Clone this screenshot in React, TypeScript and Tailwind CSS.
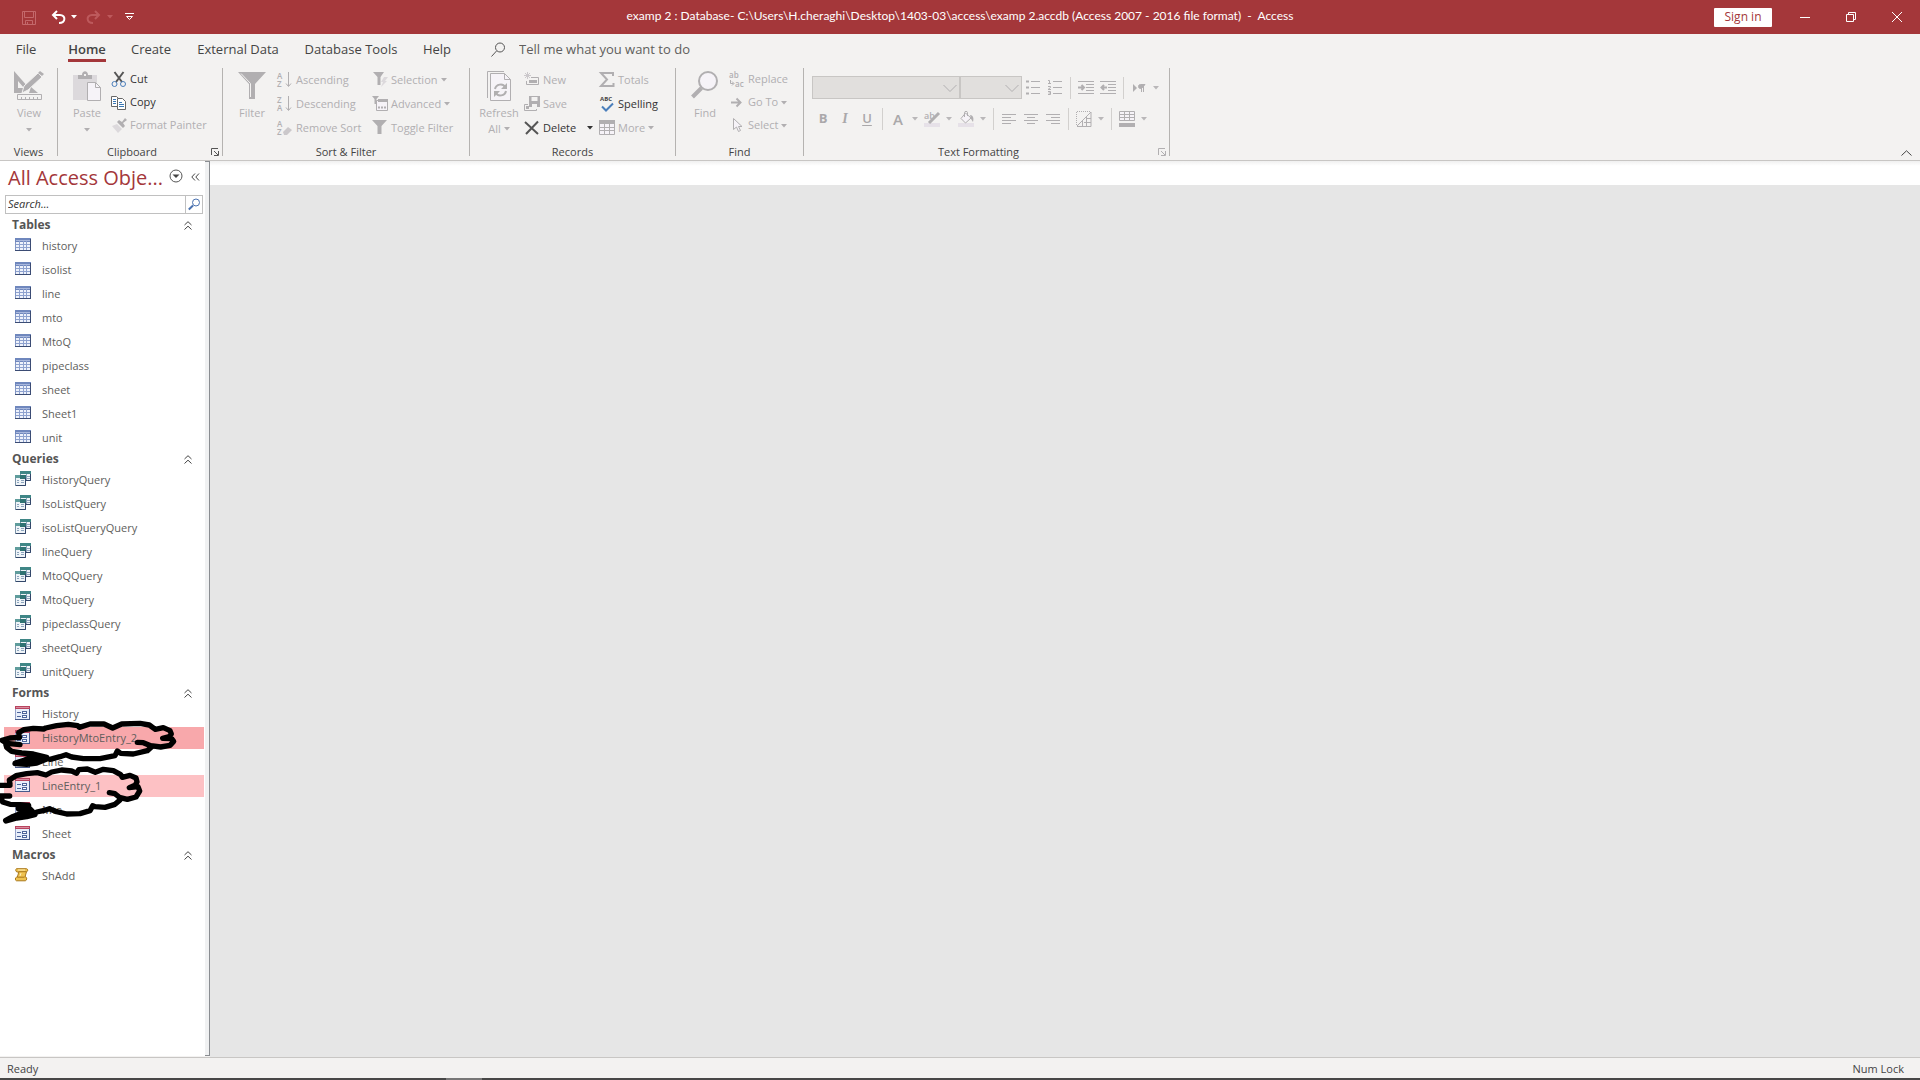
import React, { useState } from "react";

type IconProps = { className?: string };

type NavItem = { name: string; mark?: "strong" | "light" };

type NavGroup = {
  title: string;
  kind: "table" | "query" | "form" | "macro";
  items: NavItem[];
};

const TABS = [
  { name: "File", width: "w-[52px]" },
  { name: "Home", width: "w-[70px]" },
  { name: "Create", width: "w-[58px]" },
  { name: "External Data", width: "w-[116px]" },
  { name: "Database Tools", width: "w-[110px]" },
  { name: "Help", width: "w-[62px]" },
];

const NAV: NavGroup[] = [
  {
    title: "Tables",
    kind: "table",
    items: ["history", "isolist", "line", "mto", "MtoQ", "pipeclass", "sheet", "Sheet1", "unit"].map(
      (name) => ({ name })
    ),
  },
  {
    title: "Queries",
    kind: "query",
    items: [
      "HistoryQuery",
      "IsoListQuery",
      "isoListQueryQuery",
      "lineQuery",
      "MtoQQuery",
      "MtoQuery",
      "pipeclassQuery",
      "sheetQuery",
      "unitQuery",
    ].map((name) => ({ name })),
  },
  {
    title: "Forms",
    kind: "form",
    items: [
      { name: "History" },
      { name: "HistoryMtoEntry_2", mark: "strong" },
      { name: "Line" },
      { name: "LineEntry_1", mark: "light" },
      { name: "Mto" },
      { name: "Sheet" },
    ],
  },
  { title: "Macros", kind: "macro", items: [{ name: "ShAdd" }] },
];

/* ---------- small shapes ---------- */

function Caret({ className = "" }: IconProps) {
  return (
    <svg className={`shrink-0 ${className}`} width="6" height="4" viewBox="0 0 6 4" fill="currentColor">
      <path d="M0 0h6L3 3.5z" />
    </svg>
  );
}

function Launcher({ className = "" }: IconProps) {
  return (
    <svg className={className} width="8" height="8" viewBox="0 0 8 8" fill="none" stroke="currentColor">
      <path d="M.5 7V.5H7M3 3l4 4M7.5 3v4.5H3" />
    </svg>
  );
}

function Icon16({ children }: { children: React.ReactNode }) {
  return (
    <svg className="shrink-0 overflow-visible" width="16" height="16" viewBox="0 0 16 16" fill="none" stroke="#b1afb1">
      {children}
    </svg>
  );
}

/* ---------- navigation pane icons ---------- */

function TableIcon() {
  return (
    <svg width="17" height="14" viewBox="0 0 17 14">
      <rect x=".5" y=".5" width="15" height="12" fill="#eef2fb" stroke="#8296c4" />
      <rect x="0" y="0" width="16" height="4" fill="#6f87bd" />
      <path d="M1 2.5h14" stroke="#a9b8dd" />
      <path d="M1 6.5h14M1 9.5h14M4.5 3v10M8.5 3v10M11.5 3v10" stroke="#8ea2cf" />
      <path d="M0 12.500h16M15.500 1v12" stroke="#3b4c74" />
    </svg>
  );
}

function QueryIcon() {
  return (
    <svg width="17" height="16" viewBox="0 0 17 16">
      <rect x="5.500" y=".5" width="10" height="9" fill="#eff4f8" stroke="#7b93a8" />
      <rect x="5" y="0" width="11" height="3" fill="#3f8686" />
      <path d="M12 5.500h3M12 7.500h3M11.500 3v6" stroke="#8ca4bd" />
      <path d="M15.500 3v6.500H11" stroke="#33476a" fill="none" />
      <rect x=".5" y="4.500" width="10" height="10" fill="#eff4f8" stroke="#7b93a8" />
      <rect x="0" y="4" width="11" height="3" fill="#5f9c9c" />
      <rect x="5" y="4" width="6" height="4" fill="#2f7373" />
      <path d="M2 9.500h2M2 11.500h2M6 9.500h3M6 11.500h3" stroke="#8ca4bd" />
      <path d="M10.500 7v7.500H1" stroke="#33476a" fill="none" />
    </svg>
  );
}

function FormIcon() {
  return (
    <svg width="16" height="15" viewBox="0 0 16 15">
      <rect x=".5" y=".5" width="14" height="13" fill="#e8eefa" stroke="#94a1c8" />
      <rect x="0" y="0" width="15" height="3" fill="#b8445f" />
      <path d="M1 1.500h13" stroke="#d98da0" />
      <path d="M2 6.500h4M2 10.500h4" stroke="#4d649b" />
      <rect x="7.500" y="5.500" width="4" height="2" fill="#fff" stroke="#4d649b" />
      <rect x="7.500" y="9.500" width="4" height="2" fill="#fff" stroke="#4d649b" />
      <path d="M0 13.500h15M14.500 3v11" stroke="#485b8c" />
    </svg>
  );
}

function MacroIcon() {
  return (
    <svg width="14" height="14" viewBox="0 0 14 14">
      <path
        d="M1.500.7h10c1.800.3 1.500 2.800 0 3L10 9h.8c1.400.3 1.200 3.500-.5 3.800H1.500c-1.600-.3-1.500-3.300 0-3.600h.8L3.800 4H2C.4 3.600.4 1 1.500.7z"
        fill="#f0c350"
        stroke="#a9781c"
      />
      <path d="M3.500 3.700h8M2.500 9.200h7" stroke="#a9781c" />
      <path d="M3 2h7M6 5 5 8" stroke="#fdeeb5" />
    </svg>
  );
}

const NAV_ICONS = { table: TableIcon, query: QueryIcon, form: FormIcon, macro: MacroIcon };

/* ---------- ribbon pieces ---------- */

type GroupProps = {
  label: string;
  width: string;
  launcher?: "dark" | "dim";
  children: React.ReactNode;
};

function Group({ label, width, launcher, children }: GroupProps) {
  return (
    <>
      <section aria-label={label} className={`flex shrink-0 flex-col ${width}`}>
        <div className="flex h-[76px]">{children}</div>
        <div className={`relative text-center leading-4 text-[#444] ${launcher ? "pr-4" : ""}`}>
          {label}
          {launcher && (
            <button
              aria-label={`${label} settings`}
              className={`absolute right-[3px] top-1 ${
                launcher === "dark" ? "text-[#555]" : "text-[#b1afb1]"
              }`}
            >
              <Launcher />
            </button>
          )}
        </div>
      </section>
      <div className="h-[88px] w-px shrink-0 bg-[#b5b3b1]" />
    </>
  );
}

type BigProps = { label: string; icon: React.ReactNode; arrow?: boolean; second?: string };

function BigButton({ label, icon, arrow, second }: BigProps) {
  return (
    <button className="flex w-[46px] shrink-0 flex-col items-center pt-[3px] text-[#b1afb1]">
      <span className="flex h-[34px] items-start">{icon}</span>
      <span className="leading-4">{label}</span>
      {arrow && <Caret className="mt-[7px]" />}
      {second && (
        <span className="flex items-center gap-[3px] leading-4">
          {second}
          <Caret />
        </span>
      )}
    </button>
  );
}

type SmallProps = { label: string; icon: React.ReactNode; active?: boolean; arrow?: boolean; wide?: boolean };

function SmallButton({ label, icon, active, arrow, wide }: SmallProps) {
  return (
    <button
      className={`flex flex-1 items-center gap-[3px] whitespace-nowrap ${
        active ? "text-[#333]" : "text-[#b1afb1]"
      }`}
    >
      {icon}
      {label}
      {arrow && <Caret className={wide ? "ml-2" : ""} />}
    </button>
  );
}

function Tool({ label, children }: { label: string; children: React.ReactNode }) {
  return (
    <button aria-label={label} className="flex h-[22px] w-[22px] items-center justify-center text-[#aaa8aa]">
      {children}
    </button>
  );
}

function ToolCaret({ label }: { label: string }) {
  return (
    <button aria-label={label} className="flex h-[22px] w-3 items-center justify-center text-[#b9b7b9]">
      <Caret />
    </button>
  );
}

function ToolSeparator() {
  return <div className="mx-1 h-[22px] w-px bg-[#d2d0ce]" />;
}

function Combo({ label, width }: { label: string; width: string }) {
  return (
    <div className={`relative ${width}`}>
      <select
        aria-label={label}
        disabled
        className="block h-[23px] w-full appearance-none border border-[#c8c6c4] bg-[#e1dfdd]"
      />
      <svg
        className="pointer-events-none absolute right-[3px] top-2"
        width="14"
        height="9"
        viewBox="0 0 14 9"
        fill="none"
        stroke="#b1afb1"
      >
        <path d="M.5 1 7 7.500 13.500 1" />
      </svg>
    </div>
  );
}

function Letters({ top, bottom }: { top: string; bottom: string }) {
  return (
    <>
      <text x="0" y="7" fontSize="8" fontWeight="600" fill="#b1afb1" stroke="none">
        {top}
      </text>
      <text x="0" y="15" fontSize="8" fontWeight="600" fill="#b1afb1" stroke="none">
        {bottom}
      </text>
    </>
  );
}

function Ribbon() {
  return (
    <div className="relative flex h-[93px] shrink-0 border-b border-[#c8c6c4]">
      <Group label="Views" width="w-[57px]">
        <div className="pl-1.5">
          <BigButton
            label="View"
            arrow
            icon={
              <svg width="30" height="30" viewBox="0 0 30 30" fill="none">
                <path d="M0 0v22h8l6-6L0 0zm4 10 6 7H4z" fill="#b1afb1" fillRule="evenodd" />
                <path d="M8 22l2-7L24 2l4 4-14 13z" fill="#b1afb1" stroke="#f3f2f1" />
                <path d="M26 0l4 3-2 2-4-3z" fill="#b1afb1" />
                <path d="M17 16l7 6h-9z" fill="#b1afb1" />
                <path d="M3.500 23.500h24v5h-24zM7.500 26v2M11.500 26v2M15.500 26v2M19.500 26v2M23.500 26v2" stroke="#b1afb1" />
              </svg>
            }
          />
        </div>
      </Group>

      <Group label="Clipboard" width="w-[164px]" launcher="dark">
        <div className="flex gap-px pl-1.5">
          <BigButton
            label="Paste"
            arrow
            icon={
              <svg width="28" height="31" viewBox="0 0 28 31">
                <path d="M0 4h24v25H0z" fill="#dcd9dc" />
                <path d="M5 4h4c0-5 6-5 6 0h4v4H5z" fill="#b1afb1" />
                <path d="M11 3h2v2h-2z" fill="#f3f2f1" />
                <path d="M14.500 11.500h8l5 5v13h-13z" fill="#f6f3f8" stroke="#b1afb1" />
                <path d="M22.500 11.500v5h5" fill="none" stroke="#b1afb1" />
              </svg>
            }
          />
          <div className="flex h-[69px] flex-col">
            <SmallButton
              label="Cut"
              active
              icon={
                <Icon16>
                  <path d="M3.500 0 11 10M12.500 0 5 10" stroke="#555" strokeWidth="2" />
                  <circle cx="3.500" cy="12" r="2.500" stroke="#4a7ebb" />
                  <circle cx="12" cy="12" r="2.500" stroke="#4a7ebb" />
                </Icon16>
              }
            />
            <SmallButton
              label="Copy"
              active
              icon={
                <Icon16>
                  <path d="M.5 1.500h5l3 3v7h-8z" fill="#fff" stroke="#666" />
                  <path d="M2 4.500h3M2 6.500h3M2 8.500h3" stroke="#3a78b5" />
                  <path d="M6.500 3.500h5l3 3v8h-8z" fill="#fff" stroke="#666" />
                  <path d="M8 7.500h3M8 9.500h5M8 11.500h5" stroke="#3a78b5" />
                </Icon16>
              }
            />
            <SmallButton
              label="Format Painter"
              icon={
                <Icon16>
                  <path d="M1 8l5-2 5 5-4 4z" fill="#dcd9dc" stroke="none" />
                  <path d="M6 4l6 6 2-2-2-3 4-3-2-2-3 4-3-2z" fill="#b1afb1" stroke="none" />
                </Icon16>
              }
            />
          </div>
        </div>
      </Group>

      <Group label="Sort & Filter" width="w-[246px]">
        <div className="flex gap-[2px] pl-1.5">
          <BigButton
            label="Filter"
            icon={
              <svg width="28" height="30" viewBox="0 0 28 30">
                <path d="M0 1h28L17 13v15h-6V13z" fill="#b1afb1" />
                <path d="M3 2.500 12.500 12.500V26" fill="none" stroke="#f3f2f1" />
              </svg>
            }
          />
          <div className="flex h-[72px] w-[93px] flex-col">
            <SmallButton
              label="Ascending"
              icon={
                <Icon16>
                  <Letters top="A" bottom="Z" />
                  <path d="M11.500 0v14M9 11.500l2.500 3 2.500-3" />
                </Icon16>
              }
            />
            <SmallButton
              label="Descending"
              icon={
                <Icon16>
                  <Letters top="Z" bottom="A" />
                  <path d="M11.500 0v14M9 11.500l2.500 3 2.500-3" />
                </Icon16>
              }
            />
            <SmallButton
              label="Remove Sort"
              icon={
                <Icon16>
                  <Letters top="A" bottom="Z" />
                  <path d="M6 12l5-5 4 3-5 5H7z" fill="#cbc8cb" stroke="none" />
                </Icon16>
              }
            />
          </div>
          <div className="flex h-[72px] flex-col">
            <SmallButton
              label="Selection"
              arrow
              icon={
                <Icon16>
                  <path d="M1 0h11L8.500 5v8h-3V5z" fill="#b1afb1" stroke="none" />
                  <path d="M12 5h4l-3 4h2l-6 6 2-5H9z" fill="#dcd9dc" stroke="none" />
                </Icon16>
              }
            />
            <SmallButton
              label="Advanced"
              arrow
              icon={
                <Icon16>
                  <path d="M4.500 4.500h11v10h-11z" fill="#f6f3f8" />
                  <path d="M6 3h10v3H6z" fill="#b1afb1" stroke="none" />
                  <path d="M0 0h7L4.500 3v5h-2V3z" fill="#b1afb1" stroke="none" />
                  <path d="M6 11.500h2M9 11.500h2M12 11.500h2" strokeWidth="2" />
                </Icon16>
              }
            />
            <SmallButton
              label="Toggle Filter"
              icon={
                <Icon16>
                  <path d="M0 0h15L9.500 6v8h-4V6z" fill="#b1afb1" stroke="none" />
                </Icon16>
              }
            />
          </div>
        </div>
      </Group>

      <Group label="Records" width="w-[205px]">
        <div className="flex gap-[2px] pl-1.5">
          <BigButton
            label="Refresh"
            second="All"
            icon={
              <svg width="26" height="32" viewBox="0 0 26 32" fill="none" stroke="#b1afb1">
                <path d="M1.500 27V.5H18" />
                <path d="M4.500 2.500h14l6 6v21h-20z" fill="#f6f3f8" />
                <path d="M18.500 2.500v6h6" />
                <path d="M9 18c1-5 8-6 10-2M20 20c-1 5-8 6-10 2" strokeWidth="2" />
                <path d="M21 12v6h-6zM8 26v-6h6z" fill="#b1afb1" stroke="none" />
              </svg>
            }
          />
          <div className="flex h-[72px] w-[73px] flex-col">
            <SmallButton
              label="New"
              icon={
                <Icon16>
                  <path d="M3.500 0v7M0 3.500h7M1 1l5 5M6 1 1 6" stroke="#cbc8cb" />
                  <path d="M7 5.500h7.500v7h-12V9" fill="none" />
                  <path d="M5 8h8v3H5z" fill="#b1afb1" stroke="none" />
                </Icon16>
              }
            />
            <SmallButton
              label="Save"
              icon={
                <Icon16>
                  <path d="M5 0h11v11H5z" fill="#b1afb1" stroke="none" />
                  <path d="M7.500 1h6v4h-6zM8 8h5v3H8z" fill="#f3f2f1" stroke="none" />
                  <path d="M4 8.500H.5v6h12V13" />
                  <path d="M2 10h3v3H2z" fill="#b1afb1" stroke="none" />
                </Icon16>
              }
            />
            <SmallButton
              label="Delete"
              active
              arrow
              wide
              icon={
                <Icon16>
                  <path d="M1 2l13 12M14 1.500 2 14" stroke="#555" strokeWidth="2" />
                </Icon16>
              }
            />
          </div>
          <div className="flex h-[72px] flex-col">
            <SmallButton
              label="Totals"
              icon={
                <Icon16>
                  <path d="M14 4V1H2l6 6.500L2 14h12.500v-3" strokeWidth="2" />
                </Icon16>
              }
            />
            <SmallButton
              label="Spelling"
              active
              icon={
                <Icon16>
                  <text x="1" y="5" fontSize="6" fontWeight="700" fill="#444" stroke="none">
                    ABC
                  </text>
                  <path d="M3 10.500l4 4 7-7" stroke="#4a7ebb" strokeWidth="2" />
                </Icon16>
              }
            />
            <SmallButton
              label="More"
              arrow
              icon={
                <Icon16>
                  <path d="M.5.5h15v14H.5z" fill="#f6f3f8" />
                  <path d="M0 0h16v4H0z" fill="#b1afb1" stroke="none" />
                  <path d="M0 7.500h16M0 10.500h16M5.500 4v10M10.500 4v10" />
                </Icon16>
              }
            />
          </div>
        </div>
      </Group>

      <Group label="Find" width="w-[127px]">
        <div className="flex gap-px pl-1.5">
          <BigButton
            label="Find"
            icon={
              <svg width="28" height="30" viewBox="0 0 28 30" fill="none" stroke="#b1afb1">
                <circle cx="17" cy="10" r="9" fill="#f6f3f8" strokeWidth="2" />
                <path d="M10.500 17 1.500 26" strokeWidth="4" />
              </svg>
            }
          />
          <div className="flex h-[69px] flex-col">
            <SmallButton
              label="Replace"
              icon={
                <Icon16>
                  <text x="0" y="6" fontSize="8" fontWeight="600" fill="#b1afb1" stroke="none">
                    ab
                  </text>
                  <text x="6" y="15" fontSize="8" fontWeight="600" fill="#b1afb1" stroke="none">
                    ac
                  </text>
                  <path d="M1.500 8v3.500h3M3 9.500l2 2-2 2" />
                </Icon16>
              }
            />
            <SmallButton
              label="Go To"
              arrow
              icon={
                <Icon16>
                  <path d="M2 7.500h9M7.500 3.500l4 4-4 4" strokeWidth="2" />
                </Icon16>
              }
            />
            <SmallButton
              label="Select"
              arrow
              icon={
                <Icon16>
                  <path d="M4.500.5v11l3-2.500 2 4.500 2-1-2-4h3.500z" fill="#f6f3f8" />
                </Icon16>
              }
            />
          </div>
        </div>
      </Group>

      <Group label="Text Formatting" width="w-[365px]" launcher="dim">
        <div className="flex flex-col gap-[9px] pl-2 pt-2">
          <div className="flex items-center">
            <Combo label="Font" width="w-[148px]" />
            <Combo label="Font size" width="w-[62px]" />
            <Tool label="Bullets">
              <Icon16>
                <path d="M6 1.500h9M6 7.500h9M6 13.500h9" />
                <path d="M1 1.500h3M1 7.500h3M1 13.500h3" strokeWidth="2" />
              </Icon16>
            </Tool>
            <Tool label="Numbering">
              <Icon16>
                <path d="M6 1.500h9M6 7.500h9M6 13.500h9" />
                <path d="M1 .5h1.500v3M1 3.500h3M1 6.500h2.500v1L1 9.500h3M1 11.500h2.500v3H1M1.500 13h2" />
              </Icon16>
            </Tool>
            <ToolSeparator />
            <Tool label="Increase indent">
              <Icon16>
                <path d="M0 1.500h16M8 4.500h8M8 7.500h8M8 10.500h8M0 13.500h16" />
                <path d="M0 7.500h6M3.500 5 6 7.500 3.500 10" strokeWidth="2" />
              </Icon16>
            </Tool>
            <Tool label="Decrease indent">
              <Icon16>
                <path d="M0 1.500h16M8 4.500h8M8 7.500h8M8 10.500h8M0 13.500h16" />
                <path d="M7 7.500H2M4 5 1.500 7.500 4 10" strokeWidth="2" />
              </Icon16>
            </Tool>
            <ToolSeparator />
            <Tool label="Text direction">
              <Icon16>
                <path d="M2 4l4 4-4 4z" fill="#b1afb1" stroke="none" />
                <path d="M14 4.500H9.500a2 2 0 0 0 0 4h1zM10.500 4v8M12.500 4v8" fill="#b1afb1" />
              </Icon16>
            </Tool>
            <ToolCaret label="Text direction options" />
          </div>
          <div className="flex items-center">
            <Tool label="Bold">
              <b className="text-[13px]">B</b>
            </Tool>
            <Tool label="Italic">
              <i className="font-['Liberation_Serif',serif] text-sm font-bold">I</i>
            </Tool>
            <Tool label="Underline">
              <u className="text-[13px] font-semibold underline-offset-2">U</u>
            </Tool>
            <ToolSeparator />
            <Tool label="Font color">
              <span className="text-[15px] font-semibold">A</span>
            </Tool>
            <ToolCaret label="Font colors" />
            <Tool label="Highlight">
              <Icon16>
                <path d="M0 12h16v4H0z" fill="#e6e1e8" stroke="none" />
                <text x="0" y="8" fontSize="9" fontWeight="600" fill="#b1afb1" stroke="none">
                  ab
                </text>
                <path d="M15 2 8 9l-3 3" strokeWidth="3" />
              </Icon16>
            </Tool>
            <ToolCaret label="Highlight colors" />
            <Tool label="Background color">
              <Icon16>
                <path d="M0 12h16v4H0z" fill="#e6e1e8" stroke="none" />
                <path d="M7.500 2 13 7l-5.500 5L3 7.500z" fill="#f6f3f8" />
                <path d="M6.500 6V1.500c0-1.500 3-1.500 3 0V5" />
                <path d="M12 4c3 0 4 3 3 7l-2-3z" fill="#b1afb1" stroke="none" />
              </Icon16>
            </Tool>
            <ToolCaret label="Background colors" />
            <ToolSeparator />
            <Tool label="Align left">
              <Icon16>
                <path d="M1 3.500h14M1 6.500h9M1 9.500h14M1 12.500h9" />
              </Icon16>
            </Tool>
            <Tool label="Center">
              <Icon16>
                <path d="M1 3.500h14M4 6.500h8M1 9.500h14M4 12.500h8" />
              </Icon16>
            </Tool>
            <Tool label="Align right">
              <Icon16>
                <path d="M1 3.500h14M6 6.500h9M1 9.500h14M6 12.500h9" />
              </Icon16>
            </Tool>
            <ToolSeparator />
            <Tool label="Gridlines">
              <Icon16>
                <path d="M1 .5h14M.5 1v14" strokeDasharray="1 1" />
                <path d="M1 15 15 1v14.500H1M8 11.500h7M10.500 6v9M6.500 10v5M10 7.500h5" />
              </Icon16>
            </Tool>
            <ToolCaret label="Gridline styles" />
            <ToolSeparator />
            <Tool label="Alternate row color">
              <Icon16>
                <path d="M.5.5h15v9H.5z" fill="#f6f3f8" />
                <path d="M.5 3.500h15M.5 6.500h15M5.500 0v9M10.500 0v9" />
                <path d="M0 12h16v4H0z" fill="#b1afb1" stroke="none" />
              </Icon16>
            </Tool>
            <ToolCaret label="Alternate row colors" />
          </div>
        </div>
      </Group>

      <button aria-label="Collapse the ribbon" className="ml-auto mr-2 self-end pb-1">
        <svg width="11" height="6" viewBox="0 0 11 6" fill="none" stroke="#444">
          <path d="M.5 5.500 5.500.8l5 4.700" />
        </svg>
      </button>
    </div>
  );
}

/* ---------- title bar ---------- */

function TitleBar() {
  return (
    <header className="grid h-[34px] shrink-0 grid-cols-[1fr_auto_1fr] bg-[#a4373a] text-white">
      <div className="flex items-center pl-[22px]">
        <button aria-label="Save" className="mr-[14px] mt-[2px]">
          <svg width="15" height="15" viewBox="0 0 15 15" fill="none" stroke="#c4686b">
            <path d="M.5.5h13v13H.5zM2.500 1v5.500h9V1M3.500 13.500v-4h7v4M5.500 11v3" />
          </svg>
        </button>
        <button aria-label="Undo" className="mr-[5px]">
          <svg width="15" height="14" viewBox="0 0 15 14" fill="none" stroke="#fff" strokeWidth="2">
            <path d="M2 5h7c6 0 6 8-1 8M6 1 2 5l4 4" />
          </svg>
        </button>
        <Caret className="mr-[9px]" />
        <button aria-label="Redo" className="mr-[6px]">
          <svg width="15" height="14" viewBox="0 0 15 14" fill="none" stroke="#bd595c" strokeWidth="2">
            <path d="M13 5H6c-6 0-6 8 1 8M9 1l4 4-4 4" />
          </svg>
        </button>
        <Caret className="mr-3 text-[#bd595c]" />
        <button aria-label="Customize toolbar">
          <svg width="9" height="8" viewBox="0 0 9 8" fill="none" stroke="#fff">
            <path d="M0 .5h9M1.500 3.500h6l-3 3z" />
          </svg>
        </button>
      </div>
      <h1 className="whitespace-pre font-['Lato','Open_Sans',sans-serif] text-xs leading-8">
        {"examp 2 : Database- C:\\Users\\H.cheraghi\\Desktop\\1403-03\\access\\examp 2.accdb (Access 2007 - 2016 file format)  -  Access"}
      </h1>
      <div className="flex items-center justify-end">
        <button className="mr-[10px] h-[19px] w-[58px] rounded-[1px] bg-white text-xs leading-4 text-[#a4373a]">
          Sign in
        </button>
        <button aria-label="Minimize" className="flex w-[46px] justify-center">
          <svg width="10" height="10" viewBox="0 0 10 10" stroke="#fff">
            <path d="M0 5.500h10" />
          </svg>
        </button>
        <button aria-label="Restore" className="flex w-[46px] justify-center">
          <svg width="10" height="10" viewBox="0 0 10 10" fill="none" stroke="#fff">
            <path d="M.5 2.500h7v7h-7zM2.500 2.500v-2h7v7h-2" />
          </svg>
        </button>
        <button aria-label="Close" className="flex w-[46px] justify-center">
          <svg width="10" height="10" viewBox="0 0 10 10" fill="none" stroke="#fff">
            <path d="M0 0l10 10M10 0 0 10" />
          </svg>
        </button>
      </div>
    </header>
  );
}

function TabRow() {
  const [active, setActive] = useState("Home");
  return (
    <nav className="flex h-[34px] shrink-0 text-[13px] leading-[18px] text-[#444]">
      {TABS.map((tab) => (
        <button
          key={tab.name}
          onClick={() => setActive(tab.name)}
          className={`flex shrink-0 justify-center whitespace-nowrap pt-[6px] ${tab.width}`}
        >
          <span
            className={`h-[22px] ${
              active === tab.name ? "border-b-3 border-[#a4373a] font-semibold" : ""
            }`}
          >
            {tab.name}
          </span>
        </button>
      ))}
      <label className="flex items-start gap-[13px] pl-[23px] pt-[6px]">
        <svg className="mt-[2px]" width="15" height="16" viewBox="0 0 15 16" fill="none" stroke="#555">
          <circle cx="9" cy="5.500" r="4.500" />
          <path d="M5.500 9 .5 14.500" />
        </svg>
        <input
          aria-label="Tell me what you want to do"
          placeholder="Tell me what you want to do"
          className="w-[200px] bg-transparent outline-none placeholder:text-[#605e5c]"
        />
      </label>
    </nav>
  );
}

/* ---------- navigation pane ---------- */

// Hand drawn clouds round the two entry forms
function Scribbles() {
  return (
    <svg
      className="pointer-events-none absolute left-0 top-0"
      width="200"
      height="160"
      viewBox="0 12 600 480"
      fill="none"
      stroke="#000"
      strokeWidth="16"
      strokeLinecap="round"
      strokeLinejoin="round"
    >
      <path d="M58 172 56 158 72 149 100 145 131 147 137 144 170 137 205 133 233 137 238 142 270 132 312 132 338 144 365 132 420 130 448 135 466 148 490 143 510 152 514 162 508 170 488 175 515 176 521 184 510 196 482 201 452 197 430 188 412 187" />
      <path d="M455 200 442 212 400 222 362 220 352 213 345 227 300 236 250 236 215 231 198 224 180 230 150 238" />
      <path d="M58 172 30 174 6 181 20 190 60 194M16 188 20 202 35 214 65 219 100 222 140 232" />
      <path d="M46 250 70 243 95 232 140 236 110 248 80 252z" fill="#000" strokeWidth="18" />
      <path d="M0 316 30 316M30 312 28 300 48 287 80 281 112 278 138 285 155 276 185 270 215 273 230 280 236 269 262 267 286 277 310 268 340 272 362 284 367 292 390 286 408 294 411 306 405 316 388 323 414 320 419 333 408 351 382 358 358 352 345 341 328 338" />
      <path d="M360 360 345 373 315 382 285 380 278 377 270 392 240 401 200 402 170 395 148 386 130 392 110 396" />
      <path d="M0 348 29 348M2 350 8 366 30 373 60 374 86 376" />
      <path d="M18 422 50 413 80 409 104 403 90 394 70 398 40 410z" fill="#000" strokeWidth="18" />
      <path d="M56 386 84 382 96 394" fill="#000" strokeWidth="18" />
    </svg>
  );
}

function NavSection({ group }: { group: NavGroup }) {
  const [open, setOpen] = useState(true);
  const Icon = NAV_ICONS[group.kind];
  return (
    <section className="relative">
      <button
        onClick={() => setOpen(!open)}
        className="flex h-[18px] w-full items-center justify-between pl-3 pr-[13px] text-xs font-bold text-[#555]"
      >
        {group.title}
        <svg width="8" height="9" viewBox="0 0 8 9" fill="none" stroke="#444">
          <path d="M.5 4 4 .7 7.500 4M.5 8.500 4 5.200 7.500 8.500" />
        </svg>
      </button>
      {open && (
        <ul>
          {group.items.map((item) => (
            <li key={item.name} className="py-px pl-1 pr-px">
              <a
                href="#"
                className={`flex h-[22px] items-center pl-[11px] ${
                  item.mark === "strong" ? "bg-[#f8a8ab]" : item.mark === "light" ? "bg-[#fdc1c4]" : ""
                }`}
              >
                <span className="w-[27px] pb-[2px]">
                  <Icon />
                </span>
                {item.name}
              </a>
            </li>
          ))}
        </ul>
      )}
      {group.kind === "form" && open && <Scribbles />}
    </section>
  );
}

function NavPane() {
  return (
    <aside className="mb-px flex w-[210px] shrink-0 border-r border-[#8a8d91]">
      <div className="w-[205px] bg-white text-[#605e5c]">
        <div className="flex h-[33px] items-center pl-2">
          <h2 className="w-[161px] whitespace-nowrap text-xl leading-8 text-[#a4373a]">All Access Obje...</h2>
          <button aria-label="Choose category" className="mb-1">
            <svg width="14" height="14" viewBox="0 0 14 14" fill="none" stroke="#555">
              <circle cx="7" cy="7" r="6" />
              <path d="M3.500 5.500h7L7 9z" fill="#444" stroke="none" />
            </svg>
          </button>
          <button aria-label="Close pane" className="mb-[2px] ml-2">
            <svg width="9" height="8" viewBox="0 0 9 8" fill="none" stroke="#444">
              <path d="M4 .5.800 4 4 7.500M8 .5 4.800 4 8 7.500" />
            </svg>
          </button>
        </div>
        <div className="mb-[2px] ml-[5px] mr-[2px] mt-px flex h-[19px] border border-[#c0c0c0]">
          <input
            aria-label="Search"
            placeholder="Search..."
            className="w-full min-w-0 flex-1 pl-[2px] text-[11px] italic outline-none placeholder:text-[#333]"
          />
          <button
            aria-label="Search objects"
            className="flex w-[17px] items-center justify-center border-l border-[#c0c0c0]"
          >
            <svg width="13" height="13" viewBox="0 0 13 13" fill="none" stroke="#4a72b0">
              <circle cx="8" cy="4.500" r="3.500" />
              <path d="M5 7.500.8 11.500" strokeWidth="2" />
            </svg>
          </button>
        </div>
        {NAV.map((group) => (
          <NavSection key={group.title} group={group} />
        ))}
      </div>
      <div className="flex-1 border-b border-t border-[#8a8d91] bg-[#f0f1f2]" />
    </aside>
  );
}

function App() {
  return (
    <div className="flex h-screen min-h-[960px] flex-col overflow-hidden bg-[#f3f2f1] font-['Open_Sans','Noto_Sans',sans-serif] text-[11px]">
      <TitleBar />
      <TabRow />
      <Ribbon />
      <div className="flex min-h-0 flex-1">
        <NavPane />
        <main className="flex flex-1 flex-col bg-[#e6e6e6]">
          <div className="h-6 bg-linear-to-b from-[#f0f0f0] via-white via-20% to-white" />
        </main>
      </div>
      <footer className="flex h-[21px] shrink-0 items-center justify-between border-t border-[#c8c6c4] pl-[7px] pr-4 pt-[2px] text-[#444]">
        <span>Ready</span>
        <span>Num Lock</span>
      </footer>
      <div className="flex h-[2px] shrink-0 bg-[#474747]">
        <div className="ml-[446px] w-9 bg-[#777]" />
      </div>
    </div>
  );
}

export default App;
